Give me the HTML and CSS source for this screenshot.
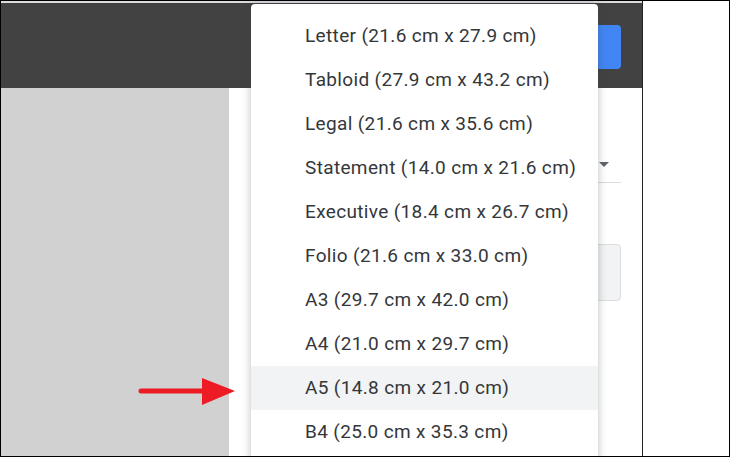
FILE: index.html
```html
<!DOCTYPE html>
<html lang="en">
<head>
    <meta charset="UTF-8">
    <title>Page setup - paper size</title>
    <link rel="stylesheet" href="styles.css">
</head>
<body>
    <div class="frame">
        <div class="app">
            <div class="top-line"></div>
            <div class="header">
                <div class="btn-primary"></div>
            </div>
            <div class="main">
                <div class="preview"></div>
                <div class="settings">
                    <div class="select"><span class="caret"></span></div>
                    <div class="field-box"></div>
                </div>
            </div>
        </div>
        <div class="outside"></div>

        <!-- paper size menu, opened over the settings panel -->
        <ul class="menu">
            <li class="menu-item">Letter (21.6 cm x 27.9 cm)</li>
            <li class="menu-item">Tabloid (27.9 cm x 43.2 cm)</li>
            <li class="menu-item">Legal (21.6 cm x 35.6 cm)</li>
            <li class="menu-item">Statement (14.0 cm x 21.6 cm)</li>
            <li class="menu-item">Executive (18.4 cm x 26.7 cm)</li>
            <li class="menu-item">Folio (21.6 cm x 33.0 cm)</li>
            <li class="menu-item">A3 (29.7 cm x 42.0 cm)</li>
            <li class="menu-item">A4 (21.0 cm x 29.7 cm)</li>
            <li class="menu-item active">A5 (14.8 cm x 21.0 cm)</li>
            <li class="menu-item">B4 (25.0 cm x 35.3 cm)</li>
        </ul>

        <svg class="pointer" width="100" height="32" viewBox="0 0 100 32">
            <line x1="3" y1="15" x2="68" y2="15" stroke="#ed1c24" stroke-width="5" stroke-linecap="round"/>
            <polygon points="64,2 97,15 64,29" fill="#ed1c24"/>
        </svg>
    </div>
</body>
</html>
```

FILE: styles.css
```css
* {
    margin: 0;
    padding: 0;
    box-sizing: border-box;
}

body {
    font-family: Roboto, 'Liberation Sans', Arial, sans-serif;
    background-color: #fff;
    color: #3c4043;
}

.frame {
    position: relative;
    display: flex;
    width: 730px;
    height: 457px;
    border: 1px solid #000;
    overflow: hidden;
}

.app {
    display: flex;
    flex-direction: column;
    width: 642px;
    border-right: 1px solid #222;
}

.top-line {
    height: 2px;
    background-color: #dadce0;
}

.header {
    display: flex;
    justify-content: flex-end;
    height: 85px;
    padding: 22px 21px 0 0;
    background-color: #424242;
}

.btn-primary {
    width: 90px;
    height: 44px;
    border-radius: 4px;
    background-color: #4285f4;
}

.main {
    display: flex;
    flex: 1;
}

.preview {
    width: 228px;
    background-color: #d1d1d1;
}

.settings {
    flex: 1;
    display: flex;
    flex-direction: column;
    align-items: flex-end;
    padding-right: 21px;
    background-color: #fff;
}

.select {
    display: flex;
    align-items: center;
    justify-content: flex-end;
    width: 120px;
    height: 36px;
    margin-top: 59px;
    padding-right: 12px;
    border-bottom: 1px solid #dadce0;
}

.caret {
    width: 0;
    height: 0;
    border-left: 5px solid transparent;
    border-right: 5px solid transparent;
    border-top: 5px solid #5f6368;
}

.field-box {
    width: 120px;
    height: 57px;
    margin-top: 61px;
    border: 1px solid #dadce0;
    border-radius: 4px;
    background-color: #f1f3f4;
}

.outside {
    flex: 1;
    background-color: #fff;
}

.menu {
    position: absolute;
    left: 250px;
    top: 3px;
    width: 347px;
    height: 470px;
    padding-top: 10px;
    list-style: none;
    background-color: #fff;
    border-radius: 4px;
    box-shadow: 0 1px 8px rgba(60, 64, 67, 0.35);
}

.menu-item {
    height: 44px;
    line-height: 44px;
    padding-left: 54px;
    font-size: 19px;
    letter-spacing: 0.35px;
    color: #34373a;
    white-space: nowrap;
}

.menu-item.active {
    background-color: #f1f3f4;
}

.pointer {
    position: absolute;
    left: 137px;
    top: 375px;
}
```
